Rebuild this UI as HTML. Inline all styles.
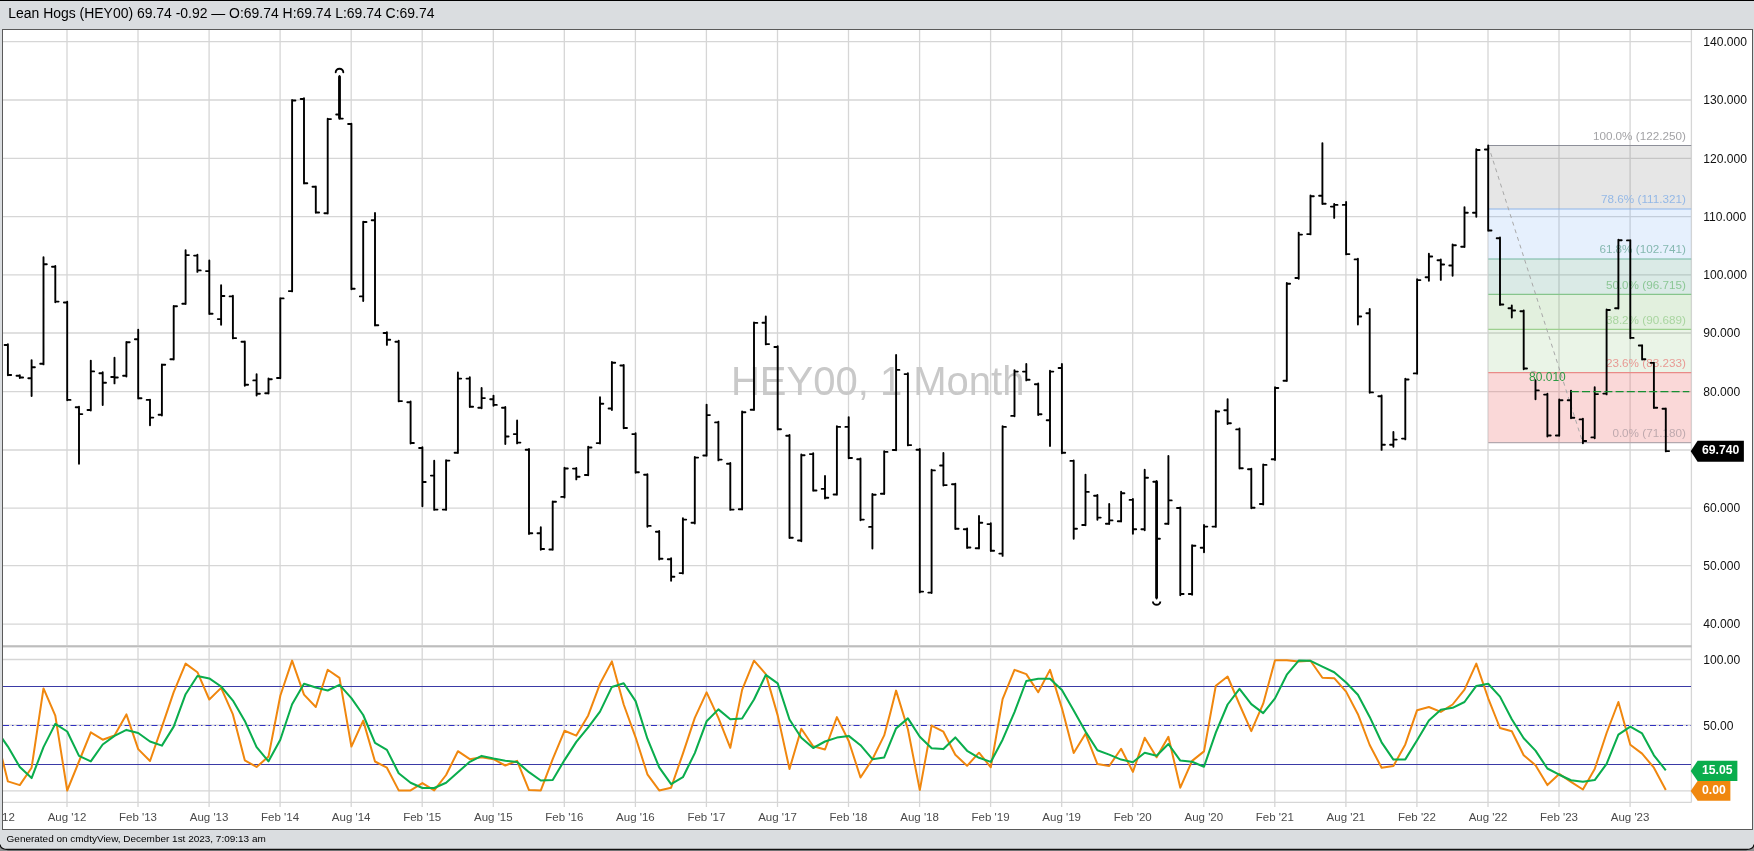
<!DOCTYPE html>
<html lang="en"><head><meta charset="utf-8"><title>Lean Hogs (HEY00)</title>
<style>html,body{margin:0;padding:0;background:#dadde0;overflow:hidden}svg{display:block;will-change:transform}text{font-family:"Liberation Sans", Arial, sans-serif}</style></head><body>
<svg width="1754" height="851" viewBox="0 0 1754 851">
<rect x="0" y="0" width="1754" height="851" fill="#dadde0"/>
<rect x="0" y="0" width="1754" height="1" fill="#000"/>
<text x="8.3" y="17.7" font-size="13.95" fill="#000">Lean Hogs (HEY00) 69.74 -0.92 — O:69.74 H:69.74 L:69.74 C:69.74</text>
<rect x="2.5" y="29.5" width="1750" height="800" fill="#fff" stroke="#5a5a5a" stroke-width="1"/>
<clipPath id="cp"><rect x="3" y="30" width="1688.5" height="800"/></clipPath>
<clipPath id="cpp"><rect x="3" y="30" width="1688.5" height="616"/></clipPath>
<clipPath id="cps"><rect x="3" y="648" width="1688.5" height="155"/></clipPath>
<path d="M67.0 30V645M67.0 648V807M138.0 30V645M138.0 648V807M209.1 30V645M209.1 648V807M280.1 30V645M280.1 648V807M351.2 30V645M351.2 648V807M422.2 30V645M422.2 648V807M493.3 30V645M493.3 648V807M564.3 30V645M564.3 648V807M635.4 30V645M635.4 648V807M706.4 30V645M706.4 648V807M777.5 30V645M777.5 648V807M848.5 30V645M848.5 648V807M919.6 30V645M919.6 648V807M990.6 30V645M990.6 648V807M1061.7 30V645M1061.7 648V807M1132.7 30V645M1132.7 648V807M1203.8 30V645M1203.8 648V807M1274.8 30V645M1274.8 648V807M1345.9 30V645M1345.9 648V807M1416.9 30V645M1416.9 648V807M1488.0 30V645M1488.0 648V807M1559.0 30V645M1559.0 648V807M1630.1 30V645M1630.1 648V807M3 624.1H1691.5M3 565.7H1691.5M3 508.1H1691.5M3 450.0H1691.5M3 391.6H1691.5M3 333.0H1691.5M3 274.9H1691.5M3 216.6H1691.5M3 158.3H1691.5M3 100.0H1691.5M3 41.7H1691.5M3 790.8H1691.5M3 725.1H1691.5M3 659.5H1691.5M3 802.3H1691.5M1691.4 30V802.5" stroke="#d6d6d6" stroke-width="1.3" fill="none"/>
<rect x="3" y="645.2" width="1688.5" height="2.2" fill="#bdbdbd"/>
<text x="877.7" y="395.2" font-size="40" fill="#c9c9c9" text-anchor="middle">HEY00, 1 Month</text>
<rect x="1488.3" y="145.5" width="202.9" height="63.5" fill="rgba(128,128,128,0.2)"/>
<rect x="1488.3" y="209" width="202.9" height="50.0" fill="rgba(100,160,240,0.16)"/>
<rect x="1488.3" y="259" width="202.9" height="35.4" fill="rgba(70,150,130,0.2)"/>
<rect x="1488.3" y="294.4" width="202.9" height="34.9" fill="rgba(110,180,90,0.2)"/>
<rect x="1488.3" y="329.3" width="202.9" height="43.3" fill="rgba(130,190,110,0.17)"/>
<rect x="1488.3" y="372.6" width="202.9" height="70.1" fill="rgba(235,100,100,0.25)"/>
<path d="M1488.3 145.5H1691.2" stroke="#8d8f99" stroke-width="1.2"/>
<path d="M1488.3 209H1691.2" stroke="#8db4e8" stroke-width="1.2"/>
<path d="M1488.3 259H1691.2" stroke="#72b5a0" stroke-width="1.2"/>
<path d="M1488.3 294.4H1691.2" stroke="#86c58c" stroke-width="1.2"/>
<path d="M1488.3 329.3H1691.2" stroke="#9dd08f" stroke-width="1.2"/>
<path d="M1488.3 372.6H1691.2" stroke="#e98a88" stroke-width="1.2"/>
<path d="M1488.3 442.7H1691.2" stroke="#b3a8ae" stroke-width="1.2"/>
<path d="M1488.3 145.5L1582.8 442.7" stroke="#a8a8a8" stroke-width="1" stroke-dasharray="4 4" fill="none"/>
<text x="1685.8" y="139.7" font-size="11.7" fill="#a3a3a6" text-anchor="end">100.0% (122.250)</text>
<text x="1685.8" y="203.2" font-size="11.7" fill="#94b8e6" text-anchor="end">78.6% (111.321)</text>
<text x="1685.8" y="253.2" font-size="11.7" fill="#85b8b0" text-anchor="end">61.8% (102.741)</text>
<text x="1685.8" y="288.6" font-size="11.7" fill="#8cc796" text-anchor="end">50.0% (96.715)</text>
<text x="1685.8" y="323.5" font-size="11.7" fill="#a9d5a0" text-anchor="end">38.2% (90.689)</text>
<text x="1685.8" y="366.8" font-size="11.7" fill="#e89a94" text-anchor="end">23.6% (83.233)</text>
<text x="1685.8" y="436.9" font-size="11.7" fill="#bfa9ae" text-anchor="end">0.0% (71.180)</text>
<path d="M7.9 344.3V375.3M4.6 345.0H7.9M7.9 375.0H11.2M19.8 375.2V378.0M16.5 375.8H19.8M19.8 377.5H23.1M31.6 360.1V396.1M28.3 378.2H31.6M31.6 367.3H34.9M43.5 257.2V364.4M40.2 363.8H43.5M43.5 264.3H46.8M55.3 266.0V302.3M52.0 266.8H55.3M55.3 301.6H58.6M67.2 301.7V400.2M63.9 302.5H67.2M67.2 399.9H70.5M79.0 406.7V463.7M75.7 407.3H79.0M79.0 414.1H82.3M90.8 360.6V410.6M87.5 410.0H90.8M90.8 371.4H94.1M102.7 372.3V405.0M99.4 373.3H102.7M102.7 382.8H106.0M114.5 357.7V383.4M111.2 377.0H114.5M114.5 377.5H117.8M126.4 341.9V376.6M123.1 375.8H126.4M126.4 342.2H129.7M138.2 329.7V398.5M134.9 339.3H138.2M138.2 398.2H141.5M150.0 399.6V425.2M146.7 399.9H150.0M150.0 417.6H153.3M161.9 364.5V415.5M158.6 414.7H161.9M161.9 364.8H165.2M173.7 305.9V359.5M170.4 359.2H173.7M173.7 306.2H177.0M185.6 250.2V304.0M182.3 303.7H185.6M185.6 255.1H188.9M197.4 254.8V271.9M194.1 255.6H197.4M197.4 270.4H200.7M209.3 260.4V314.0M206.0 271.1H209.3M209.3 313.7H212.6M221.1 285.2V324.7M217.8 319.1H221.1M221.1 296.0H224.4M232.9 295.7V338.4M229.6 296.4H232.9M232.9 338.1H236.2M244.8 341.4V385.8M241.5 341.7H244.8M244.8 384.8H248.1M256.6 374.2V395.5M253.3 380.4H256.6M256.6 393.8H259.9M268.5 378.4V393.6M265.2 393.3H268.5M268.5 379.2H271.8M280.3 298.1V378.3M277.0 378.0H280.3M280.3 298.4H283.6M292.1 100.0V291.4M288.8 291.1H292.1M292.1 100.5H295.4M304.0 98.2V183.6M300.7 99.0H304.0M304.0 183.3H307.3M315.8 186.5V212.8M312.5 186.8H315.8M315.8 212.5H319.1M327.7 118.8V213.6M324.4 213.3H327.7M327.7 119.1H331.0M339.5 75.9V118.9M336.2 114.5H339.5M339.5 118.6H342.8M351.4 123.7V289.3M348.1 124.0H351.4M351.4 288.7H354.7M363.2 221.7V301.1M359.9 296.4H363.2M363.2 222.0H366.5M375.0 213.0V325.5M371.7 220.3H375.0M375.0 325.2H378.3M386.9 332.2V344.9M383.6 333.0H386.9M386.9 339.8H390.2M398.7 340.7V401.4M395.4 341.7H398.7M398.7 401.1H402.0M410.6 401.5V443.6M407.3 402.3H410.6M410.6 443.0H413.9M422.4 447.2V506.2M419.1 448.0H422.4M422.4 482.0H425.7M434.2 460.7V509.9M430.9 475.6H434.2M434.2 509.6H437.5M446.1 460.1V509.9M442.8 509.6H446.1M446.1 460.6H449.4M457.9 372.5V453.1M454.6 452.8H457.9M457.9 378.6H461.2M469.8 377.3V407.1M466.5 378.6H469.8M469.8 406.8H473.1M481.6 388.0V408.3M478.3 407.8H481.6M481.6 398.1H484.9M493.5 395.6V405.7M490.2 399.3H493.5M493.5 404.9H496.8M505.3 407.0V444.1M502.0 407.8H505.3M505.3 436.5H508.6M517.1 420.4V443.4M513.8 434.1H517.1M517.1 442.6H520.4M529.0 449.0V534.0M525.7 449.8H529.0M529.0 533.2H532.3M540.8 527.3V549.8M537.5 533.2H540.8M540.8 549.0H544.1M552.7 501.5V549.8M549.4 549.5H552.7M552.7 501.8H556.0M564.5 467.8V497.6M561.2 496.9H564.5M564.5 468.5H567.8M576.3 467.9V479.4M573.0 468.6H576.3M576.3 476.7H579.6M588.2 446.7V475.3M584.9 475.0H588.2M588.2 447.5H591.5M600.0 397.3V443.6M596.7 443.1H600.0M600.0 403.7H603.3M611.9 362.0V410.1M608.6 408.5H611.9M611.9 362.8H615.2M623.7 364.9V428.3M620.4 365.5H623.7M623.7 428.0H627.0M635.6 433.3V472.8M632.3 434.1H635.6M635.6 472.3H638.9M647.4 474.2V526.7M644.1 474.7H647.4M647.4 525.9H650.7M659.2 530.9V559.5M655.9 531.7H659.2M659.2 558.7H662.5M671.1 558.2V580.7M667.8 559.2H671.1M671.1 576.7H674.4M682.9 518.3V573.6M679.6 573.1H682.9M682.9 519.6H686.2M694.8 457.0V523.5M691.5 522.7H694.8M694.8 457.6H698.1M706.6 404.6V455.8M703.3 455.5H706.6M706.6 415.1H709.9M718.4 421.6V460.4M715.1 422.4H718.4M718.4 459.6H721.7M730.3 462.9V509.9M727.0 463.8H730.3M730.3 509.6H733.6M742.1 411.4V509.6M738.8 509.3H742.1M742.1 412.2H745.4M754.0 322.4V410.1M750.7 409.8H754.0M754.0 322.9H757.3M765.8 316.5V344.4M762.5 322.7H765.8M765.8 344.1H769.1M777.7 346.2V429.5M774.4 347.0H777.7M777.7 429.2H781.0M789.5 435.0V538.1M786.2 435.8H789.5M789.5 537.8H792.8M801.3 454.5V541.3M798.0 540.5H801.3M801.3 455.2H804.6M813.2 453.1V490.8M809.9 454.1H813.2M813.2 490.5H816.5M825.0 476.0V498.6M821.7 488.9H825.0M825.0 497.7H828.3M836.9 426.1V494.8M833.6 494.5H836.9M836.9 426.9H840.2M848.7 417.1V458.3M845.4 426.9H848.7M848.7 458.0H852.0M860.5 458.4V520.3M857.2 459.2H860.5M860.5 519.6H863.8M872.4 493.9V548.6M869.1 526.9H872.4M872.4 494.8H875.7M884.2 451.1V494.1M880.9 493.8H884.2M884.2 451.9H887.5M896.1 355.0V450.3M892.8 450.0H896.1M896.1 369.9H899.4M907.9 373.3V445.4M904.6 374.1H907.9M907.9 445.1H911.2M919.8 449.0V592.4M916.5 449.8H919.8M919.8 591.6H923.1M931.6 469.7V593.1M928.3 592.6H931.6M931.6 470.4H934.9M943.4 452.9V485.6M940.1 465.5H943.4M943.4 485.1H946.7M955.3 483.6V529.0M952.0 484.3H955.3M955.3 528.7H958.6M967.1 528.4V548.1M963.8 529.2H967.1M967.1 547.5H970.4M979.0 516.0V548.6M975.7 548.3H979.0M979.0 522.8H982.3M990.8 523.3V551.0M987.5 524.1H990.8M990.8 550.7H994.1M1002.6 426.1V555.9M999.3 553.6H1002.6M1002.6 426.9H1005.9M1014.5 370.1V416.2M1011.2 415.9H1014.5M1014.5 371.6H1017.8M1026.3 364.0V380.4M1023.0 371.6H1026.3M1026.3 379.7H1029.6M1038.2 383.5V415.0M1034.9 384.3H1038.2M1038.2 414.2H1041.5M1050.0 370.8V446.1M1046.7 420.3H1050.0M1050.0 371.6H1053.3M1061.9 364.0V453.3M1058.6 368.0H1061.9M1061.9 452.7H1065.2M1073.7 460.5V538.7M1070.4 460.9H1073.7M1073.7 528.7H1077.0M1085.5 474.6V525.3M1082.2 525.0H1085.5M1085.5 491.9H1088.8M1097.4 495.0V519.8M1094.1 495.7H1097.4M1097.4 517.6H1100.7M1109.2 504.0V524.1M1105.9 523.7H1109.2M1109.2 520.4H1112.5M1121.1 491.7V521.5M1117.8 521.2H1121.1M1121.1 493.3H1124.4M1132.9 499.0V533.8M1129.6 499.9H1132.9M1132.9 529.2H1136.2M1144.7 469.7V530.2M1141.4 529.3H1144.7M1144.7 477.8H1148.0M1156.6 480.9V598.5M1153.3 481.7H1156.6M1156.6 538.7H1159.9M1168.4 456.0V524.1M1165.1 523.8H1168.4M1168.4 500.4H1171.7M1180.3 507.4V595.3M1177.0 508.0H1180.3M1180.3 594.0H1183.6M1192.1 545.1V594.8M1188.8 594.0H1192.1M1192.1 545.8H1195.4M1204.0 525.0V552.2M1200.7 547.8H1204.0M1204.0 526.6H1207.3M1215.8 410.7V526.9M1212.5 526.6H1215.8M1215.8 411.5H1219.1M1227.6 399.1V424.1M1224.3 410.3H1227.6M1227.6 423.3H1230.9M1239.5 428.5V468.5M1236.2 429.4H1239.5M1239.5 468.2H1242.8M1251.3 468.6V508.3M1248.0 469.3H1251.3M1251.3 507.7H1254.6M1263.2 464.4V504.6M1259.9 504.0H1263.2M1263.2 464.9H1266.5M1275.0 387.2V460.1M1271.7 459.3H1275.0M1275.0 388.0H1278.3M1286.8 283.0V381.0M1283.5 380.7H1286.8M1286.8 283.8H1290.1M1298.7 232.6V278.7M1295.4 278.0H1298.7M1298.7 234.6H1302.0M1310.5 195.4V234.4M1307.2 234.1H1310.5M1310.5 196.2H1313.8M1322.4 143.1V204.0M1319.1 195.7H1322.4M1322.4 203.7H1325.7M1334.2 203.9V217.9M1330.9 206.6H1334.2M1334.2 204.9H1337.5M1346.1 202.0V254.4M1342.8 204.9H1346.1M1346.1 254.1H1349.4M1357.9 258.7V324.5M1354.6 259.4H1357.9M1357.9 316.5H1361.2M1369.7 308.9V392.7M1366.4 313.2H1369.7M1369.7 392.4H1373.0M1381.6 395.5V449.9M1378.3 396.3H1381.6M1381.6 444.7H1384.9M1393.4 432.0V446.7M1390.1 444.7H1393.4M1393.4 439.6H1396.7M1405.3 378.7V439.4M1402.0 438.6H1405.3M1405.3 379.5H1408.6M1417.1 279.3V373.7M1413.8 373.4H1417.1M1417.1 280.1H1420.4M1428.9 253.8V280.7M1425.6 277.2H1428.9M1428.9 256.5H1432.2M1440.8 259.4V279.9M1437.5 260.2H1440.8M1440.8 264.5H1444.1M1452.6 244.5V275.8M1449.3 265.5H1452.6M1452.6 245.3H1455.9M1464.5 207.1V247.1M1461.2 246.8H1464.5M1464.5 212.7H1467.8M1476.3 149.2V216.7M1473.0 212.7H1476.3M1476.3 150.0H1479.6M1488.2 145.5V230.8M1484.9 149.5H1488.2M1488.2 230.5H1491.5M1500.0 237.5V305.0M1496.7 238.3H1500.0M1500.0 304.5H1503.3M1511.8 305.5V317.6M1508.5 308.3H1511.8M1511.8 310.5H1515.1M1523.7 310.4V369.3M1520.4 311.2H1523.7M1523.7 368.5H1527.0M1535.5 380.3V399.3M1535.5 390.4H1538.8M1547.4 393.8V436.5M1544.1 394.6H1547.4M1547.4 435.5H1550.7M1559.2 399.4V435.8M1555.9 435.5H1559.2M1559.2 400.2H1562.5M1571.0 390.6V418.2M1567.7 400.2H1571.0M1571.0 417.7H1574.3M1582.9 418.6V443.3M1579.6 419.4H1582.9M1582.9 441.0H1586.2M1594.7 387.2V438.2M1591.4 437.4H1594.7M1594.7 394.1H1598.0M1606.6 309.5V394.4M1603.3 393.6H1606.6M1606.6 310.0H1609.9M1618.4 239.7V308.6M1615.1 308.3H1618.4M1618.4 240.2H1621.7M1630.3 240.1V338.2M1627.0 240.4H1630.3M1630.3 337.9H1633.6M1642.1 345.2V359.6M1638.8 345.5H1642.1M1642.1 359.3H1645.4M1653.9 362.6V408.1M1650.6 362.9H1653.9M1653.9 407.8H1657.2M1665.8 408.5V451.4M1662.5 408.8H1665.8M1665.8 451.1H1669.1" stroke="#000" stroke-width="1.9" fill="none" stroke-linecap="round" stroke-linejoin="round" clip-path="url(#cpp)"/>
<path d="M1531.3 371.4H1535.5" stroke="#b9aeb2" stroke-width="1" fill="none"/>
<path d="M339.5 76.2V118.6" stroke="#000" stroke-width="2.7" fill="none"/>
<path d="M1156.6 481.2V598.2" stroke="#000" stroke-width="2.7" fill="none"/>
<path d="M335.7 72.3A3.8 3.6 0 0 1 343.3 72.3" stroke="#000" stroke-width="1.9" fill="none" stroke-linecap="round"/>
<path d="M1152.9 601.4A3.7 3.4 0 0 0 1160.3 601.4" stroke="#000" stroke-width="1.9" fill="none"/>
<path d="M1570.8 391.5H1689.3" stroke="#178f33" stroke-width="1.25" stroke-dasharray="8 3.2" fill="none"/>
<text x="1547.4" y="381" font-size="12" fill="#2c9b45" text-anchor="middle">80.010</text>
<path d="M3 686.5H1691M3 764.5H1691" stroke="#3a3aa6" stroke-width="1.1" fill="none"/>
<path d="M3 725.5H1691" stroke="#3030c0" stroke-width="1.1" stroke-dasharray="6 3 1.5 3" fill="none"/>
<polyline points="-3.9,734.5 7.9,781.4 19.8,785.1 31.6,767.7 43.5,688.4 55.3,715.6 67.2,790.5 79.0,761.5 90.8,732.3 102.7,739.7 114.5,735.5 126.4,714.4 138.2,749.1 150.0,761.0 161.9,726.8 173.7,692.1 185.6,663.6 197.4,672.2 209.3,699.5 221.1,687.9 232.9,714.4 244.8,760.3 256.6,767.0 268.5,756.6 280.3,695.8 292.1,660.6 304.0,694.6 315.8,707.0 327.7,669.8 339.5,677.9 351.4,746.6 363.2,720.6 375.0,761.5 386.9,767.7 398.7,790.4 410.6,790.4 422.4,783.1 434.2,790.4 446.1,775.0 457.9,751.2 469.8,759.2 481.6,757.3 493.5,759.2 505.3,765.5 517.1,760.9 529.0,790.1 540.8,790.4 552.7,759.2 564.5,730.8 576.3,735.6 588.2,715.4 600.0,683.8 611.9,661.4 623.7,704.5 635.6,737.3 647.4,774.3 659.2,790.4 671.1,787.7 682.9,753.6 694.8,717.9 706.6,692.3 718.4,717.9 730.3,747.8 742.1,689.9 754.0,660.7 765.8,674.1 777.7,715.4 789.5,769.0 801.3,728.8 813.2,746.3 825.0,749.5 836.9,717.1 848.7,741.0 860.5,777.5 872.4,759.2 884.2,735.4 896.1,690.6 907.9,729.3 919.8,790.1 931.6,725.6 943.4,731.7 955.3,754.8 967.1,765.8 979.0,752.7 990.8,767.3 1002.6,699.1 1014.5,669.9 1026.3,674.1 1038.2,692.3 1050.0,669.9 1061.9,708.1 1073.7,753.1 1085.5,733.7 1097.4,764.1 1109.2,766.0 1121.1,748.8 1132.9,771.9 1144.7,737.8 1156.6,757.3 1168.4,736.8 1180.3,787.7 1192.1,760.9 1204.0,751.4 1215.8,685.7 1227.6,676.5 1239.5,704.5 1251.3,731.2 1263.2,703.7 1275.0,660.2 1286.8,660.2 1298.7,661.4 1310.5,660.7 1322.4,677.7 1334.2,678.2 1346.1,691.6 1357.9,714.2 1369.7,745.0 1381.6,767.7 1393.4,766.0 1405.3,744.4 1417.1,710.2 1428.9,707.0 1440.8,711.9 1452.6,704.5 1464.5,689.6 1476.3,663.6 1488.2,698.3 1500.0,728.0 1511.8,731.3 1523.7,755.3 1535.5,765.2 1547.4,785.1 1559.2,773.9 1571.0,781.8 1582.9,789.5 1594.7,769.0 1606.6,733.0 1618.4,702.0 1630.3,744.7 1642.1,753.6 1653.9,767.7 1665.8,790.0" stroke="#f0870e" stroke-width="2" fill="none" stroke-linejoin="round" clip-path="url(#cps)"/>
<polyline points="-3.9,729.8 7.9,746.6 19.8,767.0 31.6,778.1 43.5,747.1 55.3,723.9 67.2,731.5 79.0,755.9 90.8,761.4 102.7,744.5 114.5,735.8 126.4,729.9 138.2,733.0 150.0,741.5 161.9,745.6 173.7,726.6 185.6,694.2 197.4,676.0 209.3,678.4 221.1,686.5 232.9,700.6 244.8,720.9 256.6,747.2 268.5,761.3 280.3,739.8 292.1,704.3 304.0,683.7 315.8,687.4 327.7,690.5 339.5,684.9 351.4,698.1 363.2,715.0 375.0,742.9 386.9,749.9 398.7,773.2 410.6,782.8 422.4,788.0 434.2,788.0 446.1,782.8 457.9,772.2 469.8,761.8 481.6,755.9 493.5,758.6 505.3,760.7 517.1,761.9 529.0,772.2 540.8,780.5 552.7,779.9 564.5,760.1 576.3,741.9 588.2,727.3 600.0,711.6 611.9,686.9 623.7,683.2 635.6,701.1 647.4,738.7 659.2,767.3 671.1,784.1 682.9,777.2 694.8,753.1 706.6,721.3 718.4,709.4 730.3,719.3 742.1,718.5 754.0,699.5 765.8,674.9 777.7,683.4 789.5,719.5 801.3,737.7 813.2,748.0 825.0,741.5 836.9,737.6 848.7,735.9 860.5,745.2 872.4,759.2 884.2,757.4 896.1,728.4 907.9,718.4 919.8,736.7 931.6,748.3 943.4,749.1 955.3,737.4 967.1,750.8 979.0,757.8 990.8,761.9 1002.6,739.7 1014.5,712.1 1026.3,681.0 1038.2,678.8 1050.0,678.8 1061.9,690.1 1073.7,710.4 1085.5,731.6 1097.4,750.3 1109.2,754.6 1121.1,759.6 1132.9,762.2 1144.7,752.8 1156.6,755.7 1168.4,744.0 1180.3,760.6 1192.1,761.8 1204.0,766.7 1215.8,732.7 1227.6,704.5 1239.5,688.9 1251.3,704.1 1263.2,713.1 1275.0,698.4 1286.8,674.7 1298.7,660.6 1310.5,660.8 1322.4,666.6 1334.2,672.2 1346.1,682.5 1357.9,694.7 1369.7,716.9 1381.6,742.3 1393.4,759.6 1405.3,759.4 1417.1,740.2 1428.9,720.5 1440.8,709.7 1452.6,707.8 1464.5,702.0 1476.3,685.9 1488.2,683.8 1500.0,696.6 1511.8,719.2 1523.7,738.2 1535.5,750.6 1547.4,768.5 1559.2,774.7 1571.0,780.3 1582.9,781.7 1594.7,780.1 1606.6,763.8 1618.4,734.7 1630.3,726.6 1642.1,733.4 1653.9,755.3 1665.8,770.4" stroke="#0aad4d" stroke-width="2.05" fill="none" stroke-linejoin="round" clip-path="url(#cps)"/>
<text x="1703.3" y="628.4" font-size="12.1" fill="#111">40.000</text>
<text x="1703.3" y="570.0" font-size="12.1" fill="#111">50.000</text>
<text x="1703.3" y="512.4" font-size="12.1" fill="#111">60.000</text>
<text x="1703.3" y="454.3" font-size="12.1" fill="#111">70.000</text>
<text x="1703.3" y="395.9" font-size="12.1" fill="#111">80.000</text>
<text x="1703.3" y="337.3" font-size="12.1" fill="#111">90.000</text>
<text x="1703.3" y="279.2" font-size="12.1" fill="#111">100.000</text>
<text x="1703.3" y="220.9" font-size="12.1" fill="#111">110.000</text>
<text x="1703.3" y="162.6" font-size="12.1" fill="#111">120.000</text>
<text x="1703.3" y="104.3" font-size="12.1" fill="#111">130.000</text>
<text x="1703.3" y="46.0" font-size="12.1" fill="#111">140.000</text>
<text x="1703.3" y="663.8" font-size="12.1" fill="#111">100.00</text>
<text x="1703.3" y="729.9" font-size="12.1" fill="#111">50.00</text>
<path d="M1690.7 451.2L1697.6 440.7H1743.9V461.7H1697.6Z" fill="#000"/>
<text x="1702" y="454.0" font-size="12.2" font-weight="bold" fill="#fff">69.740</text>
<path d="M1690.7 770.9L1697.6 760.8H1737.4V781.0H1697.6Z" fill="#0aad4d"/>
<text x="1702" y="774.2" font-size="12.2" font-weight="bold" fill="#fff">15.05</text>
<path d="M1690.7 790.9L1697.6 781.0H1730.4V800.8H1697.6Z" fill="#f0870e"/>
<text x="1702" y="794.2" font-size="12.2" font-weight="bold" fill="#fff">0.00</text>
<g clip-path="url(#cp)">
<text x="-4.1" y="821" font-size="11.5" fill="#4a4a4a" text-anchor="middle">Feb '12</text>
<text x="67.0" y="821" font-size="11.5" fill="#4a4a4a" text-anchor="middle">Aug '12</text>
<text x="138.0" y="821" font-size="11.5" fill="#4a4a4a" text-anchor="middle">Feb '13</text>
<text x="209.1" y="821" font-size="11.5" fill="#4a4a4a" text-anchor="middle">Aug '13</text>
<text x="280.1" y="821" font-size="11.5" fill="#4a4a4a" text-anchor="middle">Feb '14</text>
<text x="351.2" y="821" font-size="11.5" fill="#4a4a4a" text-anchor="middle">Aug '14</text>
<text x="422.2" y="821" font-size="11.5" fill="#4a4a4a" text-anchor="middle">Feb '15</text>
<text x="493.3" y="821" font-size="11.5" fill="#4a4a4a" text-anchor="middle">Aug '15</text>
<text x="564.3" y="821" font-size="11.5" fill="#4a4a4a" text-anchor="middle">Feb '16</text>
<text x="635.4" y="821" font-size="11.5" fill="#4a4a4a" text-anchor="middle">Aug '16</text>
<text x="706.4" y="821" font-size="11.5" fill="#4a4a4a" text-anchor="middle">Feb '17</text>
<text x="777.5" y="821" font-size="11.5" fill="#4a4a4a" text-anchor="middle">Aug '17</text>
<text x="848.5" y="821" font-size="11.5" fill="#4a4a4a" text-anchor="middle">Feb '18</text>
<text x="919.6" y="821" font-size="11.5" fill="#4a4a4a" text-anchor="middle">Aug '18</text>
<text x="990.6" y="821" font-size="11.5" fill="#4a4a4a" text-anchor="middle">Feb '19</text>
<text x="1061.7" y="821" font-size="11.5" fill="#4a4a4a" text-anchor="middle">Aug '19</text>
<text x="1132.7" y="821" font-size="11.5" fill="#4a4a4a" text-anchor="middle">Feb '20</text>
<text x="1203.8" y="821" font-size="11.5" fill="#4a4a4a" text-anchor="middle">Aug '20</text>
<text x="1274.8" y="821" font-size="11.5" fill="#4a4a4a" text-anchor="middle">Feb '21</text>
<text x="1345.9" y="821" font-size="11.5" fill="#4a4a4a" text-anchor="middle">Aug '21</text>
<text x="1416.9" y="821" font-size="11.5" fill="#4a4a4a" text-anchor="middle">Feb '22</text>
<text x="1488.0" y="821" font-size="11.5" fill="#4a4a4a" text-anchor="middle">Aug '22</text>
<text x="1559.0" y="821" font-size="11.5" fill="#4a4a4a" text-anchor="middle">Feb '23</text>
<text x="1630.1" y="821" font-size="11.5" fill="#4a4a4a" text-anchor="middle">Aug '23</text>
</g>
<text x="6.6" y="841.9" font-size="9.97" fill="#000">Generated on cmdtyView, December 1st 2023, 7:09:13 am</text>
<path d="M0 844.5V851H1754V844.5Q1753.5 849.3 1746 849.3H8Q0.5 849.3 0 844.5Z" fill="#8f9092"/>
<path d="M0 844.5Q0.5 849.5 8 849.5H1746Q1753.5 849.5 1754 844.5" stroke="#111" stroke-width="1.3" fill="none"/>
</svg></body></html>
